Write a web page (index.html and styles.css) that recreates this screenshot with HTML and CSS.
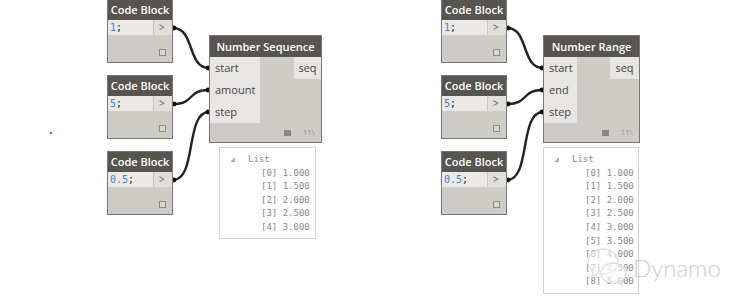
FILE: index.html
```html
<!DOCTYPE html>
<html lang="en">
<head>
    <meta charset="UTF-8">
    <title>Dynamo - Number Sequence / Number Range</title>
    <link rel="stylesheet" href="styles.css">
</head>
<body>
    <main class="canvas">
        <svg class="wires" width="751" height="301" viewBox="0 0 751 301">
            <g class="wire">
                <path d="M173,28 C195,28 187,68 209,68"/>
                <path d="M173,104 C195,104 187,90 209,90"/>
                <path d="M173,180 C197,180 185,112 209,112"/>
                <path d="M507,28 C529,28 521,68 543,68"/>
                <path d="M507,104 C529,104 521,90 543,90"/>
                <path d="M507,180 C531,180 519,112 543,112"/>
            </g>
            <g class="pin">
                <circle cx="174" cy="28" r="2.4"/><circle cx="208" cy="68" r="2.4"/>
                <circle cx="174" cy="104" r="2.4"/><circle cx="208" cy="90" r="2.4"/>
                <circle cx="174" cy="180" r="2.4"/><circle cx="208" cy="112" r="2.4"/>
                <circle cx="508" cy="28" r="2.4"/><circle cx="542" cy="68" r="2.4"/>
                <circle cx="508" cy="104" r="2.4"/><circle cx="542" cy="90" r="2.4"/>
                <circle cx="508" cy="180" r="2.4"/><circle cx="542" cy="112" r="2.4"/>
            </g>
        </svg>

        <!-- left graph -->
        <div class="node code" style="left:107px;top:-1px">
            <div class="node__title">Code Block</div>
            <div class="code__row"><span class="code__text"><b>1</b>;</span><span class="code__out">&gt;</span></div>
            <div class="node__foot"><i class="check"></i></div>
        </div>
        <div class="node code" style="left:107px;top:75px">
            <div class="node__title">Code Block</div>
            <div class="code__row"><span class="code__text"><b>5</b>;</span><span class="code__out">&gt;</span></div>
            <div class="node__foot"><i class="check"></i></div>
        </div>
        <div class="node code" style="left:107px;top:151px">
            <div class="node__title">Code Block</div>
            <div class="code__row"><span class="code__text"><b>0.5</b>;</span><span class="code__out">&gt;</span></div>
            <div class="node__foot"><i class="check"></i></div>
        </div>

        <div class="node func func--seq" style="left:209px;top:35px">
            <div class="node__title">Number Sequence</div>
            <div class="func__body">
                <ul class="ports">
                    <li>start</li>
                    <li>amount</li>
                    <li>step</li>
                </ul>
                <div class="outs"><span>seq</span></div>
            </div>
            <div class="func__foot"><i class="preview"></i><span class="lacing">11\</span></div>
        </div>

        <div class="watch" style="left:219px;top:147px;width:97px;height:92px">
            <div class="watch__head"><i class="tri"></i>List</div>
            <ol class="watch__items">
                <li>[0] 1.000</li>
                <li>[1] 1.500</li>
                <li>[2] 2.000</li>
                <li>[3] 2.500</li>
                <li>[4] 3.000</li>
            </ol>
        </div>

        <!-- right graph -->
        <div class="node code" style="left:441px;top:-1px">
            <div class="node__title">Code Block</div>
            <div class="code__row"><span class="code__text"><b>1</b>;</span><span class="code__out">&gt;</span></div>
            <div class="node__foot"><i class="check"></i></div>
        </div>
        <div class="node code" style="left:441px;top:75px">
            <div class="node__title">Code Block</div>
            <div class="code__row"><span class="code__text"><b>5</b>;</span><span class="code__out">&gt;</span></div>
            <div class="node__foot"><i class="check"></i></div>
        </div>
        <div class="node code" style="left:441px;top:151px">
            <div class="node__title">Code Block</div>
            <div class="code__row"><span class="code__text"><b>0.5</b>;</span><span class="code__out">&gt;</span></div>
            <div class="node__foot"><i class="check"></i></div>
        </div>

        <div class="node func func--range" style="left:543px;top:35px">
            <div class="node__title">Number Range</div>
            <div class="func__body">
                <ul class="ports">
                    <li>start</li>
                    <li>end</li>
                    <li>step</li>
                </ul>
                <div class="outs"><span>seq</span></div>
            </div>
            <div class="func__foot"><i class="preview"></i><span class="lacing">11\</span></div>
        </div>

        <div class="watch" style="left:543px;top:147px;width:96px;height:147px">
            <div class="watch__head"><i class="tri"></i>List</div>
            <ol class="watch__items">
                <li>[0] 1.000</li>
                <li>[1] 1.500</li>
                <li>[2] 2.000</li>
                <li>[3] 2.500</li>
                <li>[4] 3.000</li>
                <li>[5] 3.500</li>
                <li>[6] 4.000</li>
                <li>[7] 4.500</li>
                <li>[8] 5.000</li>
            </ol>
        </div>

        <i class="dot"></i>

        <div class="mark">
            <svg class="mark__logo" width="46" height="42" viewBox="0 0 46 42">
                <path d="M18,3 C9,3 3,9 3,16 C3,20 5,23 8,25 L7,30 L12,27 C14,28 16,28 18,28 C27,28 33,22 33,16 C33,9 27,3 18,3 Z"/>
                <path d="M28,17 C21,17 16,22 16,27 C16,33 21,37 28,37 C30,37 31,37 33,36 L37,39 L36,35 C39,33 41,30 41,27 C41,22 35,17 28,17 Z"/>
            </svg>
            <span class="mark__text">Dynamo</span>
        </div>
    </main>
</body>
</html>
```

FILE: styles.css
```css
html, body {
    margin: 0;
    padding: 0;
    background-color: #fff;
}
.canvas {
    position: relative;
    width: 751px;
    height: 301px;
    overflow: hidden;
    font-family: "Open Sans", "Liberation Sans", sans-serif;
}
.wires {
    position: absolute;
    left: 0;
    top: 0;
}
.wire path {
    fill: none;
    stroke: #222;
    stroke-width: 2.4;
}
.pin circle {
    fill: #111;
}

/* nodes */
.node {
    position: absolute;
    box-sizing: border-box;
    border: 1px solid #7a7672;
    background-color: #cfcbc6;
    display: flex;
    flex-direction: column;
}
.node__title {
    height: 20px;
    background-color: #58544f;
    color: #fff;
    font-size: 11px;
    font-weight: 600;
    line-height: 20px;
    text-align: center;
    white-space: nowrap;
}
.code {
    width: 66px;
    height: 64px;
}
.code__row {
    display: flex;
    height: 15px;
    line-height: 15px;
}
.code__text {
    width: 43px;
    padding-left: 2px;
    background-color: #ebe9e6;
    border-right: 1px solid #c9c5c0;
    font-family: "DejaVu Sans Mono", "Liberation Mono", monospace;
    font-size: 10px;
    color: #222;
}
.code__text b {
    font-weight: normal;
    color: #3b7fd9;
}
.code__out {
    flex: 1;
    padding-left: 5px;
    background-color: #e2dfdb;
    font-size: 10px;
    color: #555;
}
.node__foot {
    flex: 1;
    display: flex;
    justify-content: flex-end;
    align-items: flex-end;
    padding: 0 6px 6px 0;
}
.check {
    display: block;
    width: 5px;
    height: 5px;
    border: 1px solid #8e8a86;
    background-color: #d9d6d2;
}

.func {
    height: 108px;
}
.func--seq {
    width: 113px;
}
.func--range {
    width: 97px;
}
.func .node__title {
    height: 21px;
    line-height: 21px;
}
.func__body {
    display: flex;
    justify-content: space-between;
}
.ports {
    margin: 0;
    padding: 0;
    list-style: none;
    background-color: #e8e6e3;
}
.func--seq .ports {
    width: 50px;
}
.func--range .ports {
    width: 33px;
}
.ports li {
    height: 22px;
    line-height: 22px;
    padding-left: 5px;
    font-size: 11px;
    color: #444;
}
.outs span {
    display: block;
    width: 27px;
    height: 22px;
    line-height: 22px;
    text-align: center;
    background-color: #e8e6e3;
    font-size: 11px;
    color: #444;
}
.func--range .outs span {
    width: 29px;
}
.func__foot {
    flex: 1;
    display: flex;
    justify-content: flex-end;
    align-items: center;
    gap: 12px;
    padding-right: 6px;
}
.preview {
    display: block;
    width: 7px;
    height: 6px;
    background-color: #8b8784;
}
.lacing {
    font-size: 7px;
    color: #8b8784;
    letter-spacing: 0.5px;
}

/* watch preview */
.watch {
    position: absolute;
    box-sizing: border-box;
    border: 1px solid #d3d3d3;
    background-color: #fff;
    padding-top: 5px;
    font-family: "DejaVu Sans Mono", "Liberation Mono", monospace;
    font-size: 9px;
    color: #8a8a8a;
    line-height: 13.6px;
}
.watch__head {
    display: flex;
    align-items: center;
    padding-left: 10px;
}
.tri {
    display: block;
    width: 0;
    height: 0;
    margin-right: 13px;
    border-left: 5px solid transparent;
    border-bottom: 5px solid #b0b0b0;
}
.watch__items {
    margin: 0;
    padding: 0 0 0 41px;
    list-style: none;
    white-space: nowrap;
}

.dot {
    position: absolute;
    left: 50px;
    top: 132px;
    width: 2px;
    height: 2px;
    background-color: #f03c46;
}

/* watermark */
.mark {
    position: absolute;
    left: 585px;
    top: 246px;
    display: flex;
    align-items: center;
}
.mark__logo path {
    fill: rgba(255, 255, 255, 0.55);
    stroke: #e0e0e0;
    stroke-width: 1.5;
}
.mark__text {
    margin-left: 2px;
    font-family: "Lato", "Open Sans", sans-serif;
    font-weight: 300;
    font-size: 24px;
    color: #cdcdcd;
}
```
